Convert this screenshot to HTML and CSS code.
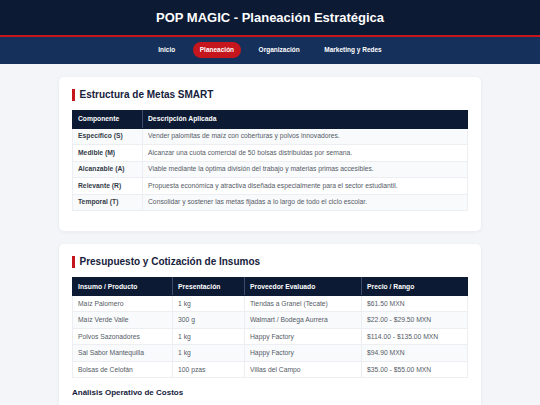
FILE: index.html
```html
<!DOCTYPE html>
<html lang="es">
<head>
<meta charset="utf-8">
<title>POP MAGIC - Planeación Estratégica</title>
<link rel="stylesheet" href="styles.css">
</head>
<body>
<header class="top">
  <h1 class="title">POP MAGIC - Planeación Estratégica</h1>
</header>
<nav class="nav">
  <a class="nav-link" href="#">Inicio</a>
  <a class="nav-link active" href="#">Planeación</a>
  <a class="nav-link" href="#">Organización</a>
  <a class="nav-link" href="#">Marketing y Redes</a>
</nav>
<main class="main">
  <section class="card">
    <h2 class="card-title">Estructura de Metas SMART</h2>
    <table class="tbl smart">
      <colgroup><col class="c-comp"><col></colgroup>
      <thead>
        <tr><th>Componente</th><th>Descripción Aplicada</th></tr>
      </thead>
      <tbody>
        <tr><td class="key">Específico (S)</td><td>Vender palomitas de maíz con coberturas y polvos innovadores.</td></tr>
        <tr><td class="key">Medible (M)</td><td>Alcanzar una cuota comercial de 50 bolsas distribuidas por semana.</td></tr>
        <tr><td class="key">Alcanzable (A)</td><td>Viable mediante la óptima división del trabajo y materias primas accesibles.</td></tr>
        <tr><td class="key">Relevante (R)</td><td>Propuesta económica y atractiva diseñada especialmente para el sector estudiantil.</td></tr>
        <tr><td class="key">Temporal (T)</td><td>Consolidar y sostener las metas fijadas a lo largo de todo el ciclo escolar.</td></tr>
      </tbody>
    </table>
  </section>

  <section class="card">
    <h2 class="card-title">Presupuesto y Cotización de Insumos</h2>
    <table class="tbl budget">
      <colgroup><col class="c1"><col class="c2"><col class="c3"><col></colgroup>
      <thead>
        <tr><th>Insumo / Producto</th><th>Presentación</th><th>Proveedor Evaluado</th><th>Precio / Rango</th></tr>
      </thead>
      <tbody>
        <tr><td>Maíz Palomero</td><td>1 kg</td><td>Tiendas a Granel (Tecate)</td><td>$61.50 MXN</td></tr>
        <tr><td>Maíz Verde Valle</td><td>300 g</td><td>Walmart / Bodega Aurrera</td><td>$22.00 - $29.50 MXN</td></tr>
        <tr><td>Polvos Sazonadores</td><td>1 kg</td><td>Happy Factory</td><td>$114.00 - $135.00 MXN</td></tr>
        <tr><td>Sal Sabor Mantequilla</td><td>1 kg</td><td>Happy Factory</td><td>$94.90 MXN</td></tr>
        <tr><td>Bolsas de Celofán</td><td>100 pzas</td><td>Villas del Campo</td><td>$35.00 - $55.00 MXN</td></tr>
      </tbody>
    </table>
    <h3 class="sub-title">Análisis Operativo de Costos</h3>
    <div class="cost-grid">
      <div class="cost-box"></div>
      <div class="cost-box"></div>
    </div>
  </section>
</main>
</body>
</html>
```

FILE: styles.css
```css
* { box-sizing: border-box; }
html, body { margin: 0; padding: 0; }
body {
  background: #f3f5f8;
  font-family: "Liberation Sans", Arial, sans-serif;
  color: #444;
}
.top {
  background: #0c1a33;
  height: 37px;
  border-bottom: 2px solid #c4161c;
  display: flex;
  align-items: center;
  justify-content: center;
}
.title {
  margin: 0;
  color: #ffffff;
  font-size: 13px;
  font-weight: bold;
  line-height: 16px;
}
.nav {
  background: #15305b;
  height: 26.5px;
  display: flex;
  align-items: center;
  justify-content: center;
  gap: 10.5px;
}
.nav-link {
  color: #ffffff;
  text-decoration: none;
  font-size: 6.5px;
  font-weight: bold;
  line-height: 8px;
  padding: 4px 7px;
  border-radius: 8px;
}
.nav-link.active { background: #c4161c; }
.main {
  width: 422px;
  margin: 13.5px auto 0;
  display: flex;
  flex-direction: column;
  gap: 13.5px;
}
.card {
  background: #ffffff;
  border-radius: 5px;
  box-shadow: 0 1px 4px rgba(20, 30, 60, 0.06);
  padding: 12.3px 13px 12.5px;
}
.card-title {
  margin: 0 0 9px;
  border-left: 3px solid #c4161c;
  padding-left: 4.5px;
  font-size: 10px;
  line-height: 12px;
  font-weight: bold;
  color: #16213b;
}
.tbl {
  width: 100%;
  border-collapse: collapse;
  table-layout: fixed;
  font-size: 6.75px;
  margin-bottom: 7px;
  border: 1px solid #eceef2;
}
.tbl th {
  background: #0c1a33;
  color: #ffffff;
  font-weight: bold;
  text-align: left;
  padding: 4.2px 5px;
  line-height: 8px;
  border: 1px solid #0c1a33;
  border-right-color: #3a4b6c;
}
.tbl th:last-child { border-right-color: #0c1a33; }
.tbl td {
  padding: 3.75px 5px;
  line-height: 8px;
  border: 1px solid #eceef2;
  color: #555b66;
  white-space: nowrap;
  overflow: hidden;
}
.tbl tbody tr:nth-child(even) td { background: #f9fafc; }
.smart tbody tr:nth-child(odd) td { background: #f9fafc; }
.smart tbody tr:nth-child(even) td { background: #ffffff; }
.tbl td.key { font-weight: bold; color: #333a46; }
.c-comp { width: 70px; }
.c1 { width: 100px; }
.c2 { width: 72px; }
.c3 { width: 117px; }
.sub-title {
  margin: 9.5px 0 8px;
  font-size: 8px;
  line-height: 10px;
  font-weight: bold;
  color: #16213b;
}
.cost-grid {
  display: grid;
  grid-template-columns: 1fr 1fr;
  gap: 10px;
}
.cost-box {
  border: 1px solid #e6e9ee;
  border-radius: 4px;
  background: #fbfcfd;
  min-height: 50px;
}
```
